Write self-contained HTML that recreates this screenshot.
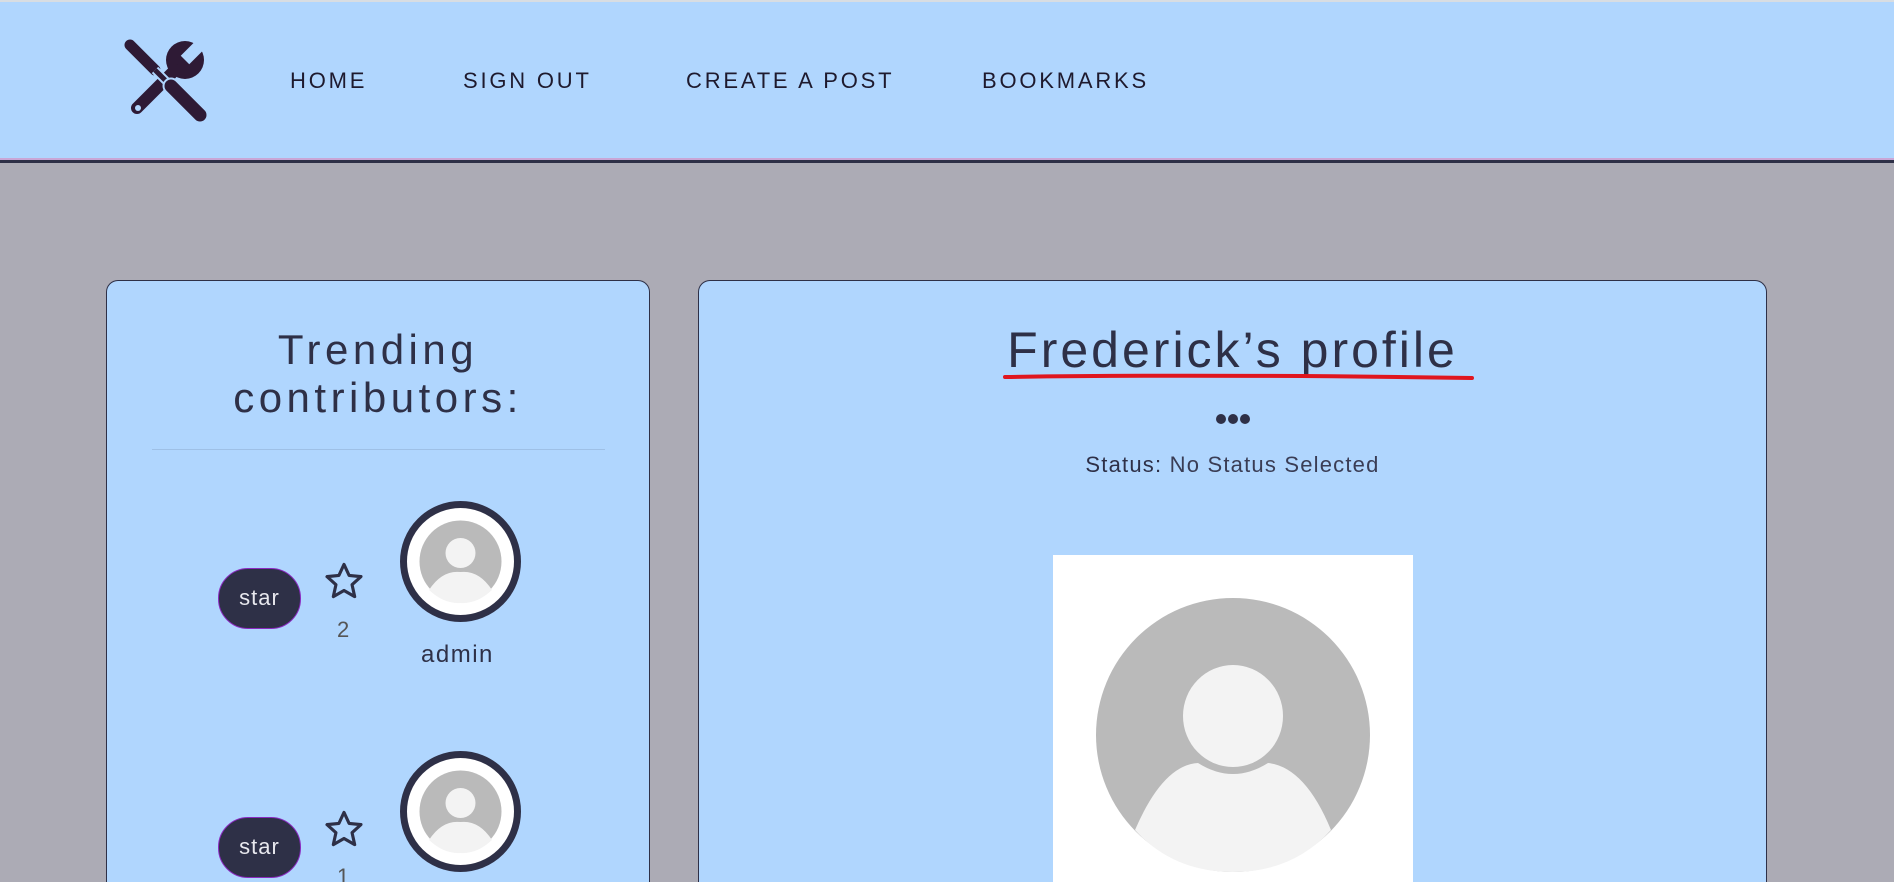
<!DOCTYPE html>
<html><head><meta charset="utf-8"><style>
*{margin:0;padding:0;box-sizing:border-box}
html{width:1894px;height:882px;overflow:hidden}
body{width:1894px;height:882px;overflow:hidden;background:#acabb5;font-family:"Liberation Sans",sans-serif;color:#2e3047;position:relative}
.nav{position:absolute;left:0;top:0;width:1894px;height:163px;background:#b0d6fe;border-top:2px solid #d8dde2;border-bottom:3px solid #2e3047;box-shadow:0 -2px 0 #c9a6d6 inset}
.nav a{position:absolute;top:66px;font-size:22px;letter-spacing:2.8px;color:#1e1a2e;text-decoration:none}
.card{position:absolute;top:280px;height:602px;background:#b0d6fe;border:1px solid #2e3047;border-bottom:none;border-radius:12px 12px 0 0}
.t{position:absolute;width:100%;text-align:center}
.btn{position:absolute;left:218px;width:83px;height:61px;border-radius:30px;background:#2e3047;border:1px solid #8a2ac0;color:#e8e8ee;font-size:22px;text-align:center;line-height:58px;letter-spacing:1px}
.av{position:absolute;left:400px;width:121px;height:121px;border-radius:50%;border:7px solid #2e3047;background:#fff;overflow:hidden}
</style></head><body>
<div class="nav">
<svg style="position:absolute;left:115px;top:28px" width="105" height="100" viewBox="0 0 105 100">
<g stroke-linecap="round">
<circle cx="70" cy="30" r="19" fill="#2e1a35"/>
<path d="M70 30 L92 8" stroke="#b0d6fe" stroke-width="12" stroke-linecap="butt"/>
<path d="M60 40 L22 78" stroke="#2e1a35" stroke-width="12"/>
<circle cx="23" cy="78" r="3" fill="#b0d6fe"/>
<path d="M15 15 L40 40" stroke="#b0d6fe" stroke-width="15"/>
<path d="M15 15 L40 40" stroke="#2e1a35" stroke-width="11"/>
<path d="M40 40 L54 54" stroke="#b0d6fe" stroke-width="9" stroke-linecap="butt"/>
<path d="M40 40 L54 54" stroke="#2e1a35" stroke-width="5" stroke-linecap="butt"/>
<path d="M56 56 L85 85" stroke="#b0d6fe" stroke-width="17"/>
<path d="M56 56 L85 85" stroke="#2e1a35" stroke-width="13"/>
</g>
</svg>
<a style="left:290px">HOME</a>
<a style="left:463px">SIGN OUT</a>
<a style="left:686px">CREATE A POST</a>
<a style="left:982px">BOOKMARKS</a>
</div>

<div class="card" style="left:106px;width:544px">
<div class="t" style="top:45px;font-size:42px;line-height:48px;letter-spacing:4.5px">Trending<br>contributors:</div>
<div style="position:absolute;left:45px;top:168px;width:453px;height:1px;background:#9ec0e6"></div>
</div>
<div style="position:absolute;left:0;top:0">
<div class="btn" style="top:568px">star</div>
<svg style="position:absolute;left:322px;top:560px" width="44" height="42" viewBox="0 0 24 24"><path d="M12 2.5l2.9 6.3 6.8.7-5.1 4.6 1.5 6.8L12 17.4l-6.1 3.5 1.5-6.8L2.3 9.5l6.8-.7z" fill="none" stroke="#2e3047" stroke-width="1.8" stroke-linejoin="round"/></svg>
<div style="position:absolute;left:337px;top:617px;font-size:22px;color:#555">2</div>
<div class="av" style="top:501px"><svg width="107" height="107" viewBox="0 0 107 107"><circle cx="53.5" cy="53.5" r="41" fill="#bababa"/><circle cx="53.5" cy="45" r="15" fill="#f3f3f3"/><path d="M22 82 Q35 62 53.5 64 Q72 62 85 82 Q70 96 53.5 95 Q37 96 22 82Z" fill="#f3f3f3"/></svg></div>
<div style="position:absolute;left:421px;top:641px;font-size:24px;letter-spacing:1.5px">admin</div>
<div class="btn" style="top:817px">star</div>
<svg style="position:absolute;left:322px;top:808px" width="44" height="42" viewBox="0 0 24 24"><path d="M12 2.5l2.9 6.3 6.8.7-5.1 4.6 1.5 6.8L12 17.4l-6.1 3.5 1.5-6.8L2.3 9.5l6.8-.7z" fill="none" stroke="#2e3047" stroke-width="1.8" stroke-linejoin="round"/></svg>
<div style="position:absolute;left:337px;top:864px;font-size:22px;color:#555">1</div>
<div class="av" style="top:751px"><svg width="107" height="107" viewBox="0 0 107 107"><circle cx="53.5" cy="53.5" r="41" fill="#bababa"/><circle cx="53.5" cy="45" r="15" fill="#f3f3f3"/><path d="M22 82 Q35 62 53.5 64 Q72 62 85 82 Q70 96 53.5 95 Q37 96 22 82Z" fill="#f3f3f3"/></svg></div>
</div>

<div class="card" style="left:698px;width:1069px">
<div class="t" style="top:40px;font-size:50px;letter-spacing:3px">Frederick’s profile</div>
<svg style="position:absolute;left:303px;top:90px" width="475" height="12"><path d="M3 6 Q200 3 470 7" stroke="#e0161e" stroke-width="4" fill="none" stroke-linecap="round"/></svg>
<svg style="position:absolute;left:516px;top:132px" width="36" height="12"><circle cx="6" cy="6" r="5" fill="#2e3047"/><circle cx="18" cy="6" r="5" fill="#2e3047"/><circle cx="30" cy="6" r="5" fill="#2e3047"/></svg>
<div class="t" style="top:171px;font-size:22px;letter-spacing:1.2px"><span>Status:</span> <span style="color:#3a3d55">No Status Selected</span></div>
<div style="position:absolute;left:354px;top:274px;width:360px;height:340px;background:#fff;overflow:hidden">
<svg width="360" height="360"><circle cx="180" cy="180" r="137" fill="#bababa"/><ellipse cx="180" cy="161" rx="50" ry="51" fill="#f3f3f3"/><path d="M82 275 Q110 210 145 208 Q180 230 215 208 Q252 212 278 275 Q240 317 180 317 Q120 317 82 275Z" fill="#f3f3f3"/></svg>
</div>
</div>
</body></html>
